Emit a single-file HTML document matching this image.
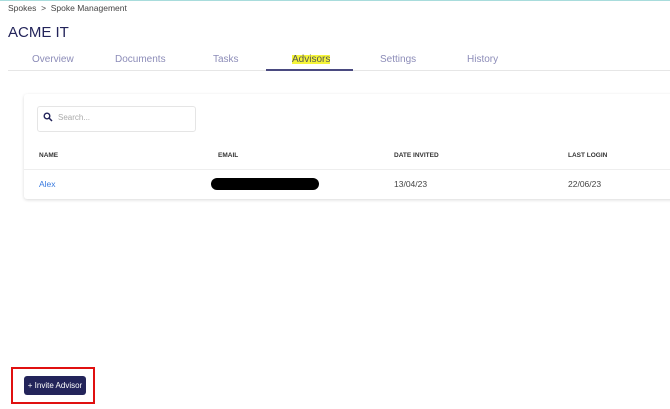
<!DOCTYPE html>
<html><head><style>
body{margin:0;width:670px;height:409px;background:#fff;font-family:"Liberation Sans",sans-serif;position:relative;overflow:hidden}
.a{position:absolute;white-space:nowrap}
</style></head><body>
<div class="a" style="left:0;top:0;width:670px;height:1px;background:#a8dcdc"></div>
<div class="a" style="left:8px;top:3px;font-size:8.5px;color:#444">Spokes &nbsp;&gt;&nbsp; Spoke Management</div>
<div class="a" style="left:8px;top:24px;font-size:15px;color:#23245a">ACME IT</div>
<div class="a" style="left:8px;top:70px;width:662px;height:1px;background:#e6e6e6"></div>
<div class="a" style="left:32px;top:54px;font-size:10px;color:#8c8cb8">Overview</div>
<div class="a" style="left:115px;top:54px;font-size:10px;color:#8c8cb8">Documents</div>
<div class="a" style="left:213px;top:54px;font-size:10px;color:#8c8cb8">Tasks</div>
<div class="a" style="left:292px;top:54px;font-size:10px;color:#555;background:#f5f53a;line-height:9px;height:9px;margin-top:1px">Advisors</div>
<div class="a" style="left:266px;top:69px;width:87px;height:2px;background:#4a4a80"></div>
<div class="a" style="left:380px;top:54px;font-size:10px;color:#8c8cb8">Settings</div>
<div class="a" style="left:467px;top:54px;font-size:10px;color:#8c8cb8">History</div>
<div class="a" style="left:24px;top:94px;width:660px;height:105px;border-radius:3px;box-shadow:0 1px 3px rgba(0,0,0,0.15);background:#fff"></div>
<div class="a" style="left:37px;top:106px;width:157px;height:24px;border:1px solid #e5e5e5;border-radius:3px"></div>
<svg class="a" style="left:43px;top:112px" width="10" height="10" viewBox="0 0 10 10"><circle cx="4" cy="4" r="2.8" fill="none" stroke="#23245a" stroke-width="1.4"/><line x1="6" y1="6" x2="9" y2="9" stroke="#23245a" stroke-width="1.5"/></svg>
<div class="a" style="left:58px;top:113px;font-size:8px;color:#aaa">Search...</div>
<div class="a" style="left:39px;top:152px;font-size:6.5px;font-weight:bold;color:#333">NAME</div>
<div class="a" style="left:218px;top:152px;font-size:6.5px;font-weight:bold;color:#333">EMAIL</div>
<div class="a" style="left:394px;top:152px;font-size:6.5px;font-weight:bold;color:#333">DATE INVITED</div>
<div class="a" style="left:568px;top:152px;font-size:6.5px;font-weight:bold;color:#333">LAST LOGIN</div>
<div class="a" style="left:24px;top:169px;width:646px;height:1px;background:#eee"></div>
<div class="a" style="left:39px;top:179px;font-size:8.5px;color:#3a7be0">Alex</div>
<div class="a" style="left:211px;top:178px;width:108px;height:12px;border-radius:6px;background:#000"></div>
<div class="a" style="left:394px;top:179px;font-size:8.5px;color:#444">13/04/23</div>
<div class="a" style="left:568px;top:179px;font-size:8.5px;color:#444">22/06/23</div>
<div class="a" style="left:11px;top:367px;width:80px;height:33px;border:2px solid #e01010"></div>
<div class="a" style="left:24px;top:376px;width:62px;height:19px;background:#23245a;border-radius:3px;color:#fff;font-size:8px;line-height:19px;text-align:center">+ Invite Advisor</div>
</body></html>
